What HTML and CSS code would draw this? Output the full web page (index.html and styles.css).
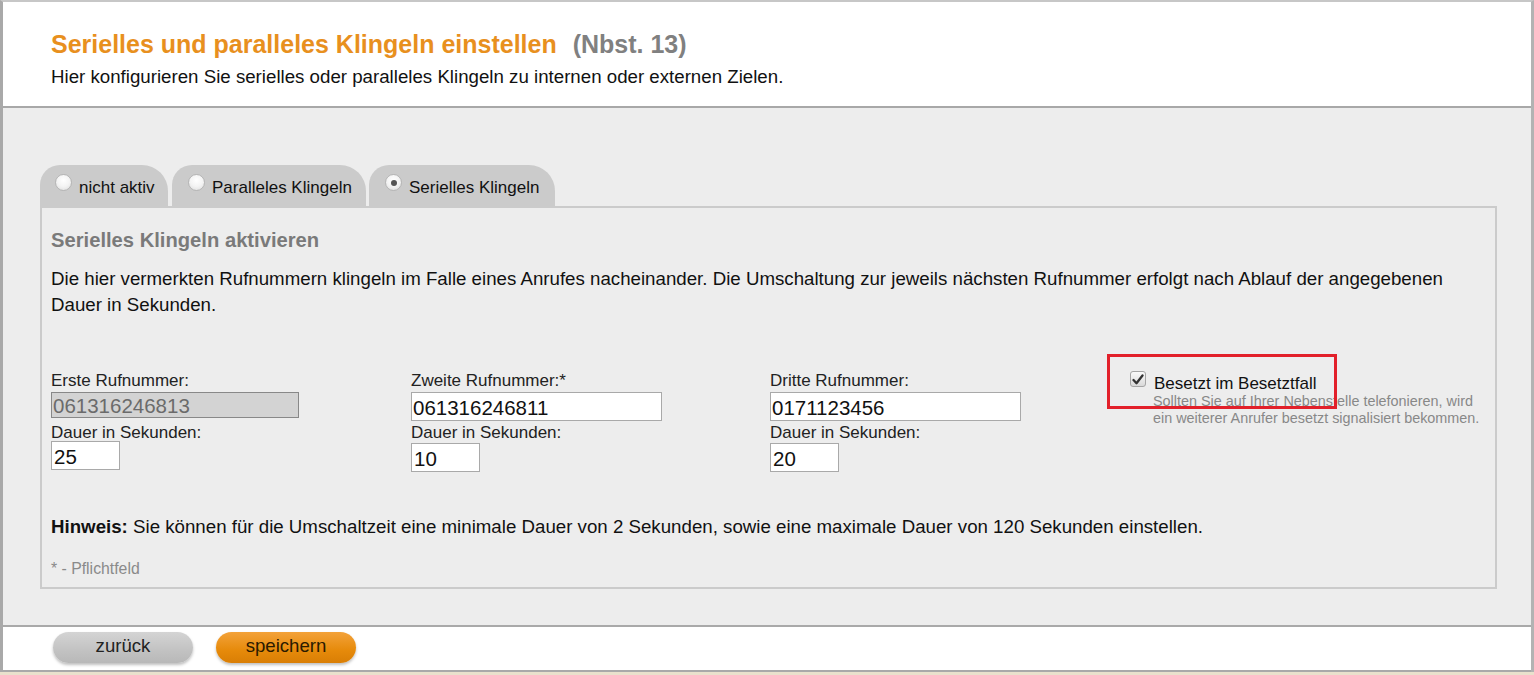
FILE: index.html
```html
<!DOCTYPE html>
<html lang="de">
<head>
<meta charset="utf-8">
<title>Serielles und paralleles Klingeln einstellen</title>
<link rel="stylesheet" href="styles.css">
</head>
<body>
<div class="frame">
  <header class="head">
    <h1 class="title">Serielles und paralleles Klingeln einstellen <span class="nbst">(Nbst. 13)</span></h1>
    <p class="subtitle">Hier konfigurieren Sie serielles oder paralleles Klingeln zu internen oder externen Zielen.</p>
  </header>
  <main class="content">
    <div class="tabs">
      <div class="tab tab1"><span class="radio"></span>nicht aktiv</div>
      <div class="tab tab2"><span class="radio"></span>Paralleles Klingeln</div>
      <div class="tab tab3"><span class="radio checked"></span>Serielles Klingeln</div>
    </div>
    <section class="panel">
      <h2 class="ptitle">Serielles Klingeln aktivieren</h2>
      <p class="desc">Die hier vermerkten Rufnummern klingeln im Falle eines Anrufes nacheinander. Die Umschaltung zur jeweils nächsten Rufnummer erfolgt nach Ablauf der angegebenen Dauer in Sekunden.</p>
      <div class="fields">
        <div class="col">
          <div class="lbl">Erste Rufnummer:</div>
          <div class="inp num disabled">061316246813</div>
          <div class="lbl lbl2">Dauer in Sekunden:</div>
          <div class="inp dur">25</div>
        </div>
        <div class="col">
          <div class="lbl">Zweite Rufnummer:*</div>
          <div class="inp num num2">061316246811</div>
          <div class="lbl lbl3">Dauer in Sekunden:</div>
          <div class="inp dur dur2">10</div>
        </div>
        <div class="col">
          <div class="lbl">Dritte Rufnummer:</div>
          <div class="inp num num2">0171123456</div>
          <div class="lbl lbl3">Dauer in Sekunden:</div>
          <div class="inp dur dur2">20</div>
        </div>
        <div class="col busy">
          <div class="chkrow">
            <span class="chk"><svg width="12" height="11" viewBox="0 0 12 11"><path d="M1.5 6 L4.5 9.2 L10.5 1.5" fill="none" stroke="#333" stroke-width="2.3" stroke-linecap="round" stroke-linejoin="round"/></svg></span>
            <span class="chklbl">Besetzt im Besetztfall</span>
          </div>
          <div class="help">Sollten Sie auf Ihrer Nebenstelle telefonieren, wird ein weiterer Anrufer besetzt signalisiert bekommen.</div>
          <div class="redbox"></div>
        </div>
      </div>
      <p class="hint"><b>Hinweis:</b> Sie können für die Umschaltzeit eine minimale Dauer von 2 Sekunden, sowie eine maximale Dauer von 120 Sekunden einstellen.</p>
      <p class="req">* - Pflichtfeld</p>
    </section>
  </main>
  <footer class="foot">
    <button class="btn back">zurück</button>
    <button class="btn save">speichern</button>
  </footer>
</div>
<div class="below"></div>
</body>
</html>
```
FILE: styles.css
```css
html, body { margin: 0; padding: 0; }
body {
  font-family: "Liberation Sans", Arial, sans-serif;
  color: #111;
  background: #e9e1cc;
  height: 675px;
  overflow: hidden;
}
.frame {
  border-left: 3px solid #a9a9a9;
  border-right: 3px solid #b3b3b3;
  border-top: 2px solid #c7c7c7;
  background: #fff;
}
.head {
  height: 106px;
  box-sizing: border-box;
  padding: 27px 0 0 48px;
  border-bottom: 2px solid #a8a8a8;
}
.title {
  margin: 0;
  font-size: 25px;
  line-height: 30px;
  font-weight: bold;
  color: #e8901e;
}
.nbst { color: #808080; margin-left: 9px; }
.subtitle {
  margin: 7px 0 0;
  font-size: 18.7px;
  line-height: 22px;
  color: #111;
}
.content {
  background: #ededed;
  height: 519px;
  box-sizing: border-box;
  padding: 57px 34px 0 37px;
  border-bottom: 2px solid #a9a9a9;
}
.tabs { display: flex; height: 41px; align-items: flex-end; }
.tab {
  height: 41px;
  box-sizing: border-box;
  background: #cbcbcb;
  border-radius: 20px 26px 0 0;
  display: flex;
  align-items: center;
  padding: 4px 0 0 15px;
  font-size: 17px;
  color: #111;
  margin-right: 4px;
}
.tab1 { width: 128px; }
.tab2 { width: 194px; margin-right: 3px; padding-left: 16px; }
.tab3 { width: 186px; padding-left: 16px; }
.radio {
  width: 17px; height: 17px;
  border-radius: 50%;
  border: 1px solid #b5b5b5;
  box-sizing: border-box;
  background: radial-gradient(circle at 50% 35%, #fff 0%, #f4f4f4 50%, #dcdcdc 100%);
  margin-right: 7px;
  margin-top: -10px;
  position: relative;
  flex: none;
}
.radio.checked::after {
  content: "";
  position: absolute;
  left: 4.5px; top: 4.5px;
  width: 6px; height: 6px;
  border-radius: 50%;
  background: #555;
}
.panel {
  border: 2px solid #cbcbcb;
  background: #ededed;
  height: 383px;
  box-sizing: border-box;
  padding: 20px 9px 0 9px;
}
.ptitle {
  margin: 0;
  font-size: 20.2px;
  line-height: 24px;
  color: #7a7a7a;
  font-weight: bold;
}
.desc {
  margin: 14px 0 0;
  font-size: 18.7px;
  line-height: 26px;
  color: #111;
}
.fields {
  display: grid;
  grid-template-columns: 360px 359px 360px 1fr;
  margin-top: 54px;
  align-items: start;
}
.col { position: relative; }
.lbl { font-size: 17px; line-height: 18px; color: #222; }
.lbl2 { margin-top: 6px; }
.lbl3 { margin-top: 3px; }
.inp {
  box-sizing: border-box;
  border: 1px solid #a9a9a9;
  background: #fff;
  font-size: 20.5px;
  color: #111;
  padding: 0 0 0 1px;
}
.num { width: 248px; height: 26px; line-height: 25px; margin-top: 2px; }
.num2 { width: 251px; height: 29px; line-height: 29px; }
.disabled { background: #d3d3d3; color: #6b6b6b; border: 1px solid #888; }
.dur { width: 69px; height: 29px; line-height: 29px; margin-top: -1px; padding-left: 2px; }
.dur2 { margin-top: 1px; }
.chkrow { display: flex; align-items: flex-start; margin-top: -1px; }
.chk {
  width: 16px; height: 16px;
  box-sizing: border-box;
  border: 1px solid #a5a5a5;
  border-radius: 3px;
  background: linear-gradient(#fafafa, #d9d9d9);
  display: flex; align-items: center; justify-content: center;
  margin-right: 8px;
  flex: none;
}
.chklbl { font-size: 17px; line-height: 18px; margin-top: 4px; }
.help {
  font-size: 14.4px;
  line-height: 17px;
  color: #888;
  margin: 0 0 0 23px;
}
.redbox {
  position: absolute;
  left: -23px; top: -18px;
  width: 230px; height: 55px;
  box-sizing: border-box;
  border: 3px solid #e2202a;
  pointer-events: none;
}
.hint {
  margin: 44px 0 0;
  font-size: 18.7px;
  line-height: 22px;
}
.req {
  margin: 22px 0 0;
  font-size: 15.8px;
  line-height: 18px;
  color: #8a8a8a;
}
.foot {
  background: #fff;
  height: 45px;
  box-sizing: border-box;
  padding: 5px 0 0 50px;
  display: flex;
  gap: 23px;
  align-items: flex-start;
  border-bottom: 2px solid #a9a9a9;
}
.btn {
  width: 140px;
  height: 31px;
  border: none;
  border-radius: 16px;
  font-family: "Liberation Sans", Arial, sans-serif;
  font-size: 18.6px;
  color: #222;
  padding: 0 0 3px;
  box-shadow: 0 2px 3px rgba(0,0,0,0.25);
}
.back { background: linear-gradient(#d4d4d4, #c2c2c2 60%, #b8b8b8); }
.save { background: linear-gradient(#f3a23a, #e68a0a 60%, #d97e05); color: #2a1a00; }
.below { height: 3px; }
```
